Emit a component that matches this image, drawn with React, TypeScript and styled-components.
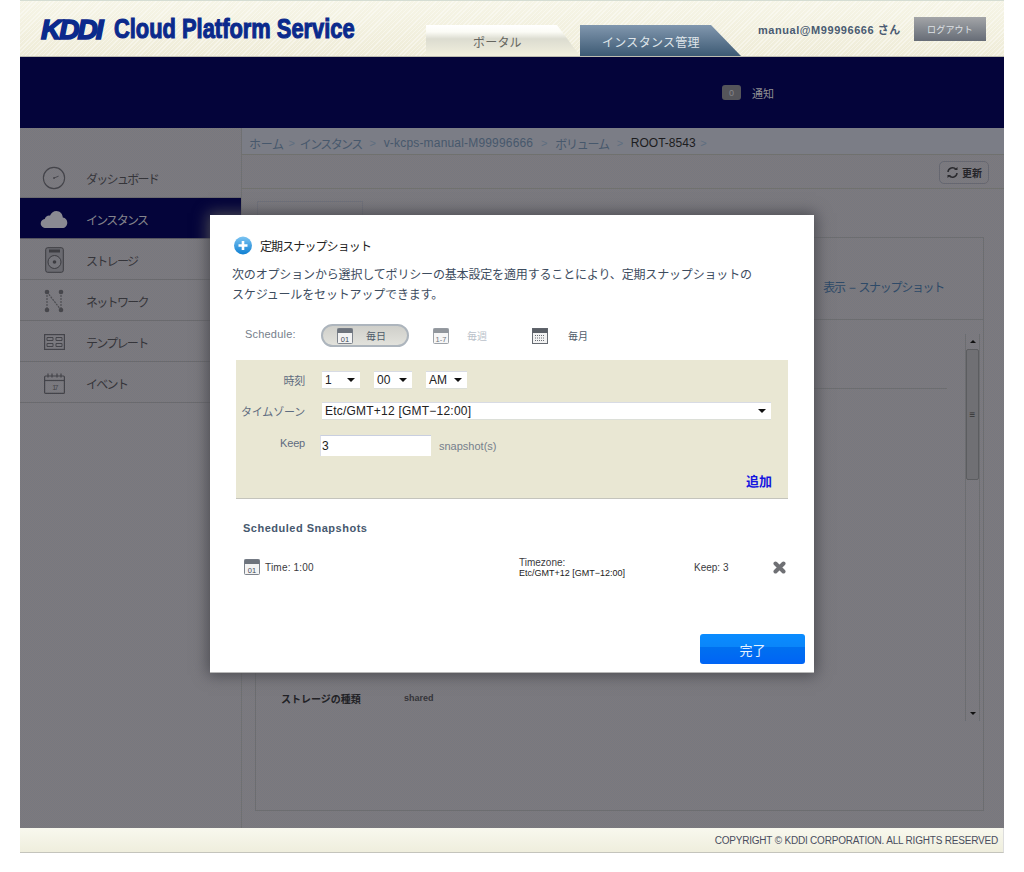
import React from "react";
import styled, { createGlobalStyle } from "styled-components";

const FONT = `"Liberation Sans", "Noto Sans CJK JP", sans-serif`;

const Global = createGlobalStyle`
  html, body { margin: 0; padding: 0; background: #fff; }
  body { font-family: ${FONT}; }
  * { box-sizing: border-box; }
`;

const Shell = styled.div`
  position: relative;
  width: 984px;
  height: 853px;
  margin-left: 20px;
  display: flex;
  flex-direction: column;
`;

const Header = styled.header`
  height: 57px;
  flex: none;
  display: flex;
  border-top: 1px solid #d5ddd3;
  border-bottom: 1px solid #bdbcb0;
  background:
    repeating-linear-gradient(135deg, rgba(255,255,255,.4) 0 1px, transparent 1px 3px),
    linear-gradient(#f6f5e7, #efecd8);
`;

const Logo = styled.div`
  width: 406px;
  flex: none;
  padding: 13px 0 0 21px;
  display: flex;
  align-items: center;
  height: 44px;
  color: #0b2a8c;
  white-space: nowrap;
`;

const LogoMark = styled.span`
  font-size: 28px;
  font-weight: 700;
  font-style: italic;
  letter-spacing: -2px;
  -webkit-text-stroke: 1.6px #0b2a8c;
  display: inline-block;
  width: 73px;
`;

const LogoName = styled.span`
  font-size: 27px;
  font-weight: 700;
  -webkit-text-stroke: 1.1px #0b2a8c;
  display: inline-block;
  transform: scaleX(.81);
  transform-origin: left center;
`;

const Tabs = styled.nav`
  display: flex;
  align-items: flex-end;
  height: 55px;
`;

const Tab = styled.div<{ $active?: boolean }>`
  height: 31px;
  font-size: 12px;
  display: flex;
  align-items: center;
  color: ${p => (p.$active ? "#dfe5ea" : "#66665f")};
  width: ${p => (p.$active ? "161px" : "154px")};
  padding-left: ${p => (p.$active ? "22px" : "47px")};
  padding-top: 1px;
  letter-spacing: ${p => (p.$active ? ".3px" : ".2px")};
  background: ${p =>
    p.$active
      ? "linear-gradient(#8197ae, #3d5a74)"
      : "linear-gradient(#ffffff 0, #fcfcf6 22%, #dcdcd0 45%, #f2f0de 100%)"};
  clip-path: polygon(0 0, 131px 0, 100% 100%, 0 100%);
`;

const UserArea = styled.div`
  display: flex;
  align-items: flex-start;
  margin-left: 17px;
  padding-top: 16px;
`;

const UserName = styled.span`
  font-size: 11px;
  font-weight: 700;
  letter-spacing: .55px;
  color: #4a5b72;
  width: 156px;
  padding-top: 4px;
  white-space: nowrap;
`;

const Logout = styled.button`
  width: 72px;
  height: 24px;
  border: 0;
  padding: 0;
  font: 9px ${FONT};
  letter-spacing: .2px;
  color: #dfe2e6;
  background: linear-gradient(#a3a5a8, #666c76);
`;

const NoticeBar = styled.div`
  height: 71px;
  flex: none;
  background: #04043a;
  display: flex;
  align-items: center;
  padding-left: 702px;
  gap: 11px;
  font-size: 11px;
  color: #8f8f92;
`;

const Badge = styled.span`
  width: 19px;
  height: 15px;
  border-radius: 3px;
  background: #55555a;
  font-size: 9px;
  color: #85858a;
  display: flex;
  align-items: center;
  justify-content: center;
`;

const Main = styled.div`
  flex: 1;
  min-height: 0;
  display: flex;
  background-color: #7a7a80;
  background-image: repeating-conic-gradient(#7f7a7c 0 25%, #757881 0 50%);
  background-size: 2px 2px;
`;

const Sidebar = styled.aside`
  width: 221px;
  flex: none;
  padding-top: 29px;
`;

const NavItem = styled.div<{ $active?: boolean }>`
  height: 41px;
  display: flex;
  align-items: center;
  padding-top: 2px;
  font-size: 12px;
  letter-spacing: -1.7px;
  color: ${p => (p.$active ? "#84848c" : "#35353a")};
  background: ${p => (p.$active ? "#04043a" : "transparent")};
  border-bottom: 1px solid ${p => (p.$active ? "#55555f" : "#6a6a6e")};
`;

const NavIcon = styled.span`
  width: 66px;
  padding-left: 2px;
  flex: none;
  display: flex;
  justify-content: center;
  align-items: center;
`;

const Content = styled.div`
  flex: 1;
  min-width: 0;
  display: flex;
  flex-direction: column;
  border-left: 1px solid #6f7072;
`;

const Breadcrumb = styled.div`
  height: 27px;
  flex: none;
  display: flex;
  align-items: center;
  padding: 4px 0 0 7px;
  font-size: 12px;
  white-space: nowrap;
  background: #7b7d86;
  border-bottom: 1px solid #70716f;
`;

const Crumb = styled.span<{ $current?: boolean; $track?: number }>`
  color: ${p => (p.$current ? "#1c1c20" : "#47586c")};
  letter-spacing: ${p => p.$track ?? 0}px;
`;

const Sep = styled.span<{ $gap?: number }>`
  color: #5e6e80;
  font-size: 11px;
  width: ${p => p.$gap ?? 22}px;
  text-align: center;
  flex: none;
`;

const Toolbar = styled.div`
  height: 34px;
  flex: none;
  display: flex;
  justify-content: flex-end;
  align-items: center;
  padding: 2px 15px 0 0;
  border-bottom: 1px solid #70716f;
`;

const Refresh = styled.div`
  width: 50px;
  height: 23px;
  border: 1px solid #666770;
  border-radius: 5px;
  display: flex;
  align-items: center;
  justify-content: center;
  gap: 3px;
  font-size: 10px;
  font-weight: 700;
  color: #25252a;
`;

const TabStub = styled.div`
  height: 36px;
  flex: none;
  margin: 12px 0 0 15px;
  width: 106px;
  border: 1px solid #70717a;
  border-bottom: 0;
`;

const Panel = styled.section`
  flex: 1;
  min-height: 0;
  margin: 0 20px 17px 13px;
  border: 1px solid #6c6d70;
  display: flex;
  flex-direction: column;
`;

const PanelHead = styled.div`
  height: 82px;
  flex: none;
  display: flex;
  justify-content: flex-end;
  align-items: center;
  padding: 16px 39px 0 0;
  margin-left: 30px;
  font-size: 12px;
  letter-spacing: -1.3px;
  word-spacing: 2px;
  color: #2e4a68;
  border-bottom: 1px solid #6c6d70;
`;

const PanelBody = styled.div`
  display: flex;
  padding: 14px 3px 0 25px;
`;

const DetailList = styled.div`
  flex: 1;
  height: 387px;
  display: flex;
  flex-direction: column;
  padding-bottom: 15px;
`;

const DetailRule = styled.div`
  height: 1px;
  margin: 54px 18px 0 0;
  background: #6c6d70;
`;

const DetailRow = styled.div`
  margin-top: auto;
  height: 16px;
  display: flex;
  align-items: center;
  font-size: 10px;
  color: #222226;
`;

const DetailKey = styled.span`
  width: 123px;
  font-weight: 700;
`;

const DetailValue = styled.span`
  font-size: 9px;
  font-weight: 700;
  color: #35353a;
`;

const ScrollTrack = styled.div`
  width: 15px;
  height: 387px;
  flex: none;
  display: flex;
  flex-direction: column;
  align-items: center;
  border-left: 1px solid #6c6d70;
  border-right: 1px solid #6c6d70;
`;

const ScrollArrow = styled.div<{ $down?: boolean }>`
  width: 0;
  height: 0;
  flex: none;
  margin: 6px 0;
  border-left: 3px solid transparent;
  border-right: 3px solid transparent;
  ${p => (p.$down ? "border-top: 3px solid #111; margin-top: auto;" : "border-bottom: 3px solid #111;")}
`;

const ScrollThumb = styled.div`
  width: 13px;
  height: 131px;
  flex: none;
  border: 1px solid #5c5d60;
  border-radius: 2px;
  background: #707074;
  display: flex;
  align-items: center;
  justify-content: center;
  font-size: 10px;
  color: #333;
`;

const Footer = styled.footer`
  height: 25px;
  flex: none;
  display: flex;
  align-items: center;
  justify-content: flex-end;
  padding-right: 5px;
  font-size: 10px;
  letter-spacing: -.2px;
  color: #4a4d5e;
  background: linear-gradient(#f8f8ee, #efeedd);
  border-bottom: 1px solid #c4c4bc;
  border-right: 1px solid #ddd;
`;

const Modal = styled.div`
  position: absolute;
  left: 190px;
  top: 215px;
  width: 604px;
  height: 458px;
  background: #fff;
  box-shadow: 0 0 14px 2px #4a4a50;
  border-bottom: 1px solid #b8b8b8;
  padding: 21px 9px 0 22px;
  color: #3b4a5c;
  display: flex;
  flex-direction: column;
`;

const TitleRow = styled.div`
  display: flex;
  align-items: center;
  gap: 8px;
  height: 19px;
  padding-left: 2px;
  font-size: 12px;
  color: #222;
  letter-spacing: -.9px;
`;

const Description = styled.p`
  margin: 10px 0 0;
  font-size: 12px;
  line-height: 20px;
  width: 540px;
  letter-spacing: -.16px;
  color: #3d4c5e;
  height: 40px;
  white-space: pre-line;
`;

const ScheduleRow = styled.div`
  display: flex;
  align-items: center;
  margin-top: 19px;
  height: 23px;
`;

const ScheduleLabel = styled.span`
  width: 89px;
  padding: 0 0 4px 13px;
  font-size: 11px;
  letter-spacing: .2px;
  color: #76808c;
`;

const ScheduleOption = styled.div<{
  $selected?: boolean;
  $faded?: boolean;
  $w: number;
  $pad: number;
  $gap: number;
}>`
  width: ${p => p.$w}px;
  height: 23px;
  display: flex;
  align-items: center;
  font-size: 10px;
  color: ${p => (p.$faded ? "#a4adb8" : "#4f5b6a")};
  gap: ${p => p.$gap}px;
  padding-left: ${p => p.$pad}px;
  border-radius: ${p => (p.$selected ? "12px" : "0")};
  border: ${p => (p.$selected ? "2px solid #adb5bd" : "2px solid transparent")};
  background: ${p => (p.$selected ? "linear-gradient(#cfcfca, #e2e2dc)" : "none")};
  opacity: ${p => (p.$faded ? 0.75 : 1)};
`;

const FormBox = styled.div`
  margin: 13px 17px 0 4px;
  height: 139px;
  flex: none;
  background-color: #e9e7d3;
  border-bottom: 1px solid #c4c4bc;
  display: flex;
  flex-direction: column;
  padding: 11px 0 0;
  position: relative;
`;

const FormRow = styled.div<{ $mt?: number }>`
  display: flex;
  align-items: center;
  margin-top: ${p => p.$mt ?? 0}px;
`;

const FormLabel = styled.label<{ $lift?: number }>`
  width: 69px;
  flex: none;
  text-align: right;
  font-size: 11px;
  color: #5f6c80;
  white-space: nowrap;
  letter-spacing: -.2px;
  padding-bottom: ${p => p.$lift ?? 0}px;
`;

const Select = styled.div<{ $w: number; $ml?: number; $mr?: number }>`
  width: ${p => p.$w}px;
  height: 18px;
  margin: 0 ${p => p.$mr ?? 0}px 0 ${p => p.$ml ?? 0}px;
  background: #fff;
  border-top: 1px solid #d8dbe4;
  border-bottom: 1px solid #dcdfd8;
  display: flex;
  align-items: center;
  justify-content: space-between;
  padding: 0 5px 0 3px;
  font-size: 12px;
  color: #222;
  flex: none;
`;

const ZoneText = styled.span`
  letter-spacing: .22px;
`;

const Caret = styled.span`
  width: 0;
  height: 0;
  border-left: 4px solid transparent;
  border-right: 4px solid transparent;
  border-top: 4px solid #111;
`;

const KeepInput = styled.input`
  width: 111px;
  height: 21px;
  flex: none;
  margin-left: 15px;
  border: 0;
  border-top: 1px solid #c9cfe0;
  border-left: 1px solid #dcdfe8;
  padding: 0 1px;
  font: 12px ${FONT};
  color: #222;
  background: #fff;
  outline: none;
`;

const Hint = styled.span`
  margin-left: 8px;
  font-size: 11px;
  color: #76808c;
`;

const AddLink = styled.a`
  position: absolute;
  right: 16px;
  bottom: 8px;
  font-size: 13px;
  font-weight: 700;
  color: #1515e0;
`;

const SectionTitle = styled.h3`
  margin: 22px 0 0 11px;
  height: 14px;
  line-height: 14px;
  font-size: 11px;
  font-weight: 700;
  letter-spacing: .5px;
  color: #46586e;
`;

const SnapshotRow = styled.div`
  display: flex;
  align-items: center;
  height: 32px;
  margin: 16px 0 0 12px;
  font-size: 10px;
  color: #3a3a3e;
`;

const SnapshotTime = styled.div`
  width: 275px;
  display: flex;
  align-items: center;
  gap: 5px;
  letter-spacing: .2px;
`;

const SnapshotZone = styled.div`
  width: 175px;
  padding-top: 2px;
  display: flex;
  flex-direction: column;
  line-height: 11px;
`;

const ZoneValue = styled.span`
  font-size: 9px;
  color: #222;
  white-space: nowrap;
`;

const SnapshotKeep = styled.div`
  width: 79px;
`;

const Actions = styled.div`
  margin-top: auto;
  padding-bottom: 8px;
  display: flex;
  justify-content: flex-end;
`;

const Done = styled.button`
  width: 105px;
  height: 30px;
  border: 0;
  border-radius: 3px;
  font: 13px ${FONT};
  color: #e6f2ff;
  background: linear-gradient(#0a8cff 0, #0a86fa 42%, #0070f0 45%, #0064f5 100%);
`;

const Stroke = { fill: "none", stroke: "#44444a", strokeWidth: 1.2 };

const Clock = () => (
  <svg width="24" height="24" viewBox="0 0 26 26">
    <circle cx="13" cy="13" r="11.5" {...Stroke} />
    <path d="M13 13l5-2" {...Stroke} strokeWidth="1" />
    <circle cx="13" cy="13" r="1" fill="#44444a" />
  </svg>
);
const Cloud = () => (
  <svg width="28" height="19" viewBox="0 0 29 20">
    <path fill="#8a8a92" d="M6 19c-3 0-5.500-2-5.500-4.800 0-2.500 1.800-4.400 4.300-4.700C5.500 6.800 8 5.500 10.200 6 11.600 2.800 14.200 1 17 1c3.800 0 6.600 3 6.800 7 2.800.4 4.700 2.700 4.700 5.400 0 3-2.300 5.600-5.200 5.600z" />
  </svg>
);
const Disk = () => (
  <svg width="19" height="26" viewBox="0 0 19 26">
    <rect x=".7" y=".7" width="17.600" height="24.600" rx="2" fill="#6a6a70" stroke="#3d3d42" />
    <path d="M4 2.500h11v3H4z" fill="#3d3d42" />
    <circle cx="9.500" cy="15" r="6.500" fill="#75757b" stroke="#3d3d42" />
    <circle cx="9.500" cy="15" r="1.800" fill="#3d3d42" />
  </svg>
);
const NetworkIcon = () => (
  <svg width="20" height="24" viewBox="0 0 20 24">
    <path d="M3 3v18M3 3l14 18M17 3v18" stroke="#4d4d52" strokeWidth="1.200" fill="none" strokeDasharray="2 1" />
    {[[3, 3], [17, 3], [3, 21], [17, 21]].map(([x, y]) => (
      <circle key={`${x}-${y}`} cx={x} cy={y} r="2.300" fill="#47474c" />
    ))}
  </svg>
);
const TemplateIcon = () => (
  <svg width="21" height="16" viewBox="0 0 21 16">
    <rect x=".6" y=".6" width="19.800" height="14.800" {...Stroke} />
    <path d="M3 3.500h6v3H3zM12 3.500h6v3h-6zM3 9.500h6v3H3zM12 9.500h6v3h-6z" {...Stroke} strokeWidth="1" />
  </svg>
);
const EventIcon = () => (
  <svg width="21" height="21" viewBox="0 0 21 21">
    <rect x=".6" y="3" width="19.800" height="17.400" rx="1" {...Stroke} />
    <path d="M.6 7.500h19.800" {...Stroke} />
    <path d="M4 .5v4M8 .5v4M13 .5v4M17 .5v4" {...Stroke} />
    <text x="10.500" y="17" fontSize="7" textAnchor="middle" fill="#44444a" fontFamily="Liberation Sans">17</text>
  </svg>
);
const DayIcon = ({ label }: { label: string }) => (
  <svg width="16" height="16" viewBox="0 0 16 16">
    <rect x=".5" y=".5" width="15" height="15" rx="1" fill="#f3f3f3" stroke="#7d838c" />
    <rect x=".5" y=".5" width="15" height="4.500" fill="#6d737c" />
    <text x="8" y="13.500" textAnchor="middle" fontSize="7.500" fill="#444b55" fontFamily="Liberation Sans">{label}</text>
  </svg>
);
const MonthIcon = () => (
  <svg width="16" height="16" viewBox="0 0 16 16">
    <rect x=".5" y=".5" width="15" height="15" fill="#f2f2f2" stroke="#666b72" />
    <rect x=".5" y=".5" width="15" height="4.500" fill="#5a5f66" />
    <path d="M3 7.500h10M3 10h10M3 12.500h10" stroke="#666b72" strokeDasharray="1 1" />
  </svg>
);
const PlusBadge = () => (
  <svg width="18" height="20" viewBox="0 0 18 20">
    <defs>
      <linearGradient id="plusFill" x1="0" y1="0" x2="0" y2="1">
        <stop offset="0" stopColor="#7cc4f2" />
        <stop offset="1" stopColor="#0e7fd2" />
      </linearGradient>
    </defs>
    <circle cx="9" cy="9.500" r="9" fill="url(#plusFill)" />
    <path d="M9 5v9M4.500 9.500h9" stroke="#fff" strokeWidth="2.600" />
  </svg>
);
const RefreshIcon = () => (
  <svg width="13" height="13" viewBox="0 0 13 13">
    <path d="M2 6a4.500 4.500 0 0 1 8-2.500M11 7a4.500 4.500 0 0 1-8 2.500" fill="none" stroke="#2a2a2e" strokeWidth="1.500" />
    <path d="M8 4h3.500V1zM5 9H1.500v3z" fill="#2a2a2e" />
  </svg>
);
const RemoveIcon = () => (
  <svg width="13" height="13" viewBox="0 0 13 13">
    <path d="M2.500 2.500l8 8M10.500 2.500l-8 8" stroke="#6f7074" strokeWidth="4" strokeLinecap="round" />
  </svg>
);

const NAV: { label: string; icon: React.ReactNode; active?: boolean }[] = [
  { label: "ダッシュボード", icon: <Clock /> },
  { label: "インスタンス", icon: <Cloud />, active: true },
  { label: "ストレージ", icon: <Disk /> },
  { label: "ネットワーク", icon: <NetworkIcon /> },
  { label: "テンプレート", icon: <TemplateIcon /> },
  { label: "イベント", icon: <EventIcon /> },
];

const CRUMBS = [
  { text: "ホーム", track: -.3, gap: 16 },
  { text: "インスタンス", track: -1.6, gap: 22 },
  { text: "v-kcps-manual-M99996666", track: .18, gap: 22 },
  { text: "ボリューム", track: -1.2, gap: 22 },
];

export default function App() {
  return (
    <>
      <Global />
      <Shell>
        <Header>
          <Logo>
            <LogoMark>KDDI</LogoMark>
            <LogoName>Cloud Platform Service</LogoName>
          </Logo>
          <Tabs>
            <Tab>ポータル</Tab>
            <Tab $active>インスタンス管理</Tab>
          </Tabs>
          <UserArea>
            <UserName>manual@M99996666 さん</UserName>
            <Logout>ログアウト</Logout>
          </UserArea>
        </Header>
        <NoticeBar>
          <Badge>0</Badge>
          <span>通知</span>
        </NoticeBar>
        <Main>
          <Sidebar>
            {NAV.map(item => (
              <NavItem key={item.label} $active={item.active}>
                <NavIcon>{item.icon}</NavIcon>
                {item.label}
              </NavItem>
            ))}
          </Sidebar>
          <Content>
            <Breadcrumb>
              {CRUMBS.map(c => (
                <React.Fragment key={c.text}>
                  <Crumb $track={c.track}>{c.text}</Crumb>
                  <Sep $gap={c.gap}>&gt;</Sep>
                </React.Fragment>
              ))}
              <Crumb $current>ROOT-8543</Crumb>
              <Sep $gap={16}>&gt;</Sep>
            </Breadcrumb>
            <Toolbar>
              <Refresh>
                <RefreshIcon />
                更新
              </Refresh>
            </Toolbar>
            <TabStub />
            <Panel>
              <PanelHead>表示 − スナップショット</PanelHead>
              <PanelBody>
                <DetailList>
                  <DetailRule />
                  <DetailRow>
                    <DetailKey>ストレージの種類</DetailKey>
                    <DetailValue>shared</DetailValue>
                  </DetailRow>
                </DetailList>
                <ScrollTrack>
                  <ScrollArrow />
                  <ScrollThumb>≡</ScrollThumb>
                  <ScrollArrow $down />
                </ScrollTrack>
              </PanelBody>
            </Panel>
          </Content>
        </Main>
        <Footer>COPYRIGHT © KDDI CORPORATION. ALL RIGHTS RESERVED</Footer>

        <Modal>
          <TitleRow>
            <PlusBadge />
            定期スナップショット
          </TitleRow>
          <Description>
            {"次のオプションから選択してポリシーの基本設定を適用することにより、定期スナップショットの\nスケジュールをセットアップできます。"}
          </Description>
          <ScheduleRow>
            <ScheduleLabel>Schedule:</ScheduleLabel>
            <ScheduleOption $selected $w={88} $pad={14} $gap={13}>
              <DayIcon label="01" />
              毎日
            </ScheduleOption>
            <ScheduleOption $faded $w={99} $pad={22} $gap={18}>
              <DayIcon label="1-7" />
              毎週
            </ScheduleOption>
            <ScheduleOption $w={90} $pad={22} $gap={20}>
              <MonthIcon />
              毎月
            </ScheduleOption>
          </ScheduleRow>
          <FormBox>
            <FormRow>
              <FormLabel>時刻</FormLabel>
              <Select $w={38} $ml={17} $mr={14}>1<Caret /></Select>
              <Select $w={38} $mr={14}>00<Caret /></Select>
              <Select $w={41}>AM<Caret /></Select>
            </FormRow>
            <FormRow $mt={13}>
              <FormLabel>タイムゾーン</FormLabel>
              <Select $w={449} $ml={17}>
                <ZoneText>Etc/GMT+12 [GMT−12:00]</ZoneText>
                <Caret />
              </Select>
            </FormRow>
            <FormRow $mt={15}>
              <FormLabel $lift={6}>Keep</FormLabel>
              <KeepInput defaultValue="3" />
              <Hint>snapshot(s)</Hint>
            </FormRow>
            <AddLink>追加</AddLink>
          </FormBox>
          <SectionTitle>Scheduled Snapshots</SectionTitle>
          <SnapshotRow>
            <SnapshotTime>
              <DayIcon label="01" />
              Time: 1:00
            </SnapshotTime>
            <SnapshotZone>
              Timezone:
              <ZoneValue>Etc/GMT+12 [GMT−12:00]</ZoneValue>
            </SnapshotZone>
            <SnapshotKeep>Keep: 3</SnapshotKeep>
            <RemoveIcon />
          </SnapshotRow>
          <Actions>
            <Done>完了</Done>
          </Actions>
        </Modal>
      </Shell>
    </>
  );
}
